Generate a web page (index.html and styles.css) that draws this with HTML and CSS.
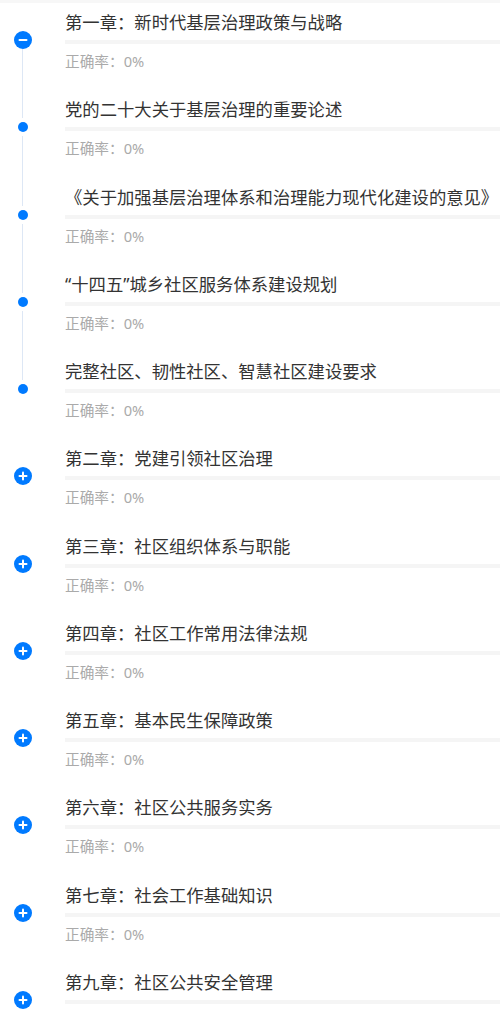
FILE: index.html
```html
<!DOCTYPE html>
<html lang="zh-CN">
<head>
  <meta charset="UTF-8">
  <meta name="viewport" content="width=device-width, initial-scale=1.0">
  <title>章节练习</title>
  <link rel="stylesheet" href="styles.css">
</head>
<body>
  <div class="top-strip"></div>

  <ul class="chapter-list">
    <!-- expanded chapter -->
    <li class="row first">
      <div class="rail">
        <span class="seg top"></span>
        <svg class="toggle" viewBox="0 0 18 18"><circle cx="9" cy="9" r="9" fill="#007aff"/><rect x="4.5" y="8" width="9" height="2" rx="1" fill="#fff"/></svg>
        <span class="seg bottom"></span>
      </div>
      <div class="content">
        <div class="title">第一章：新时代基层治理政策与战略</div>
        <div class="bar"></div>
        <div class="rate">正确率：0%</div>
      </div>
    </li>
    <li class="row">
      <div class="rail">
        <span class="seg top"></span>
        <span class="dot"></span>
        <span class="seg bottom"></span>
      </div>
      <div class="content">
        <div class="title">党的二十大关于基层治理的重要论述</div>
        <div class="bar"></div>
        <div class="rate">正确率：0%</div>
      </div>
    </li>
    <li class="row">
      <div class="rail">
        <span class="seg top"></span>
        <span class="dot"></span>
        <span class="seg bottom"></span>
      </div>
      <div class="content">
        <div class="title">《关于加强基层治理体系和治理能力现代化建设的意见》</div>
        <div class="bar"></div>
        <div class="rate">正确率：0%</div>
      </div>
    </li>
    <li class="row">
      <div class="rail">
        <span class="seg top"></span>
        <span class="dot"></span>
        <span class="seg bottom"></span>
      </div>
      <div class="content">
        <div class="title">“十四五”城乡社区服务体系建设规划</div>
        <div class="bar"></div>
        <div class="rate">正确率：0%</div>
      </div>
    </li>
    <li class="row last">
      <div class="rail">
        <span class="seg top"></span>
        <span class="dot"></span>
        <span class="seg bottom"></span>
      </div>
      <div class="content">
        <div class="title">完整社区、韧性社区、智慧社区建设要求</div>
        <div class="bar"></div>
        <div class="rate">正确率：0%</div>
      </div>
    </li>

    <!-- collapsed chapters -->
    <li class="row closed">
      <div class="rail">
        <span class="seg top"></span>
        <svg class="toggle" viewBox="0 0 18 18"><circle cx="9" cy="9" r="9" fill="#007aff"/><rect x="4.5" y="8" width="9" height="2" rx="1" fill="#fff"/><rect x="8" y="4.5" width="2" height="9" rx="1" fill="#fff"/></svg>
        <span class="seg bottom"></span>
      </div>
      <div class="content">
        <div class="title">第二章：党建引领社区治理</div>
        <div class="bar"></div>
        <div class="rate">正确率：0%</div>
      </div>
    </li>
    <li class="row closed">
      <div class="rail">
        <span class="seg top"></span>
        <svg class="toggle" viewBox="0 0 18 18"><circle cx="9" cy="9" r="9" fill="#007aff"/><rect x="4.5" y="8" width="9" height="2" rx="1" fill="#fff"/><rect x="8" y="4.5" width="2" height="9" rx="1" fill="#fff"/></svg>
        <span class="seg bottom"></span>
      </div>
      <div class="content">
        <div class="title">第三章：社区组织体系与职能</div>
        <div class="bar"></div>
        <div class="rate">正确率：0%</div>
      </div>
    </li>
    <li class="row closed">
      <div class="rail">
        <span class="seg top"></span>
        <svg class="toggle" viewBox="0 0 18 18"><circle cx="9" cy="9" r="9" fill="#007aff"/><rect x="4.5" y="8" width="9" height="2" rx="1" fill="#fff"/><rect x="8" y="4.5" width="2" height="9" rx="1" fill="#fff"/></svg>
        <span class="seg bottom"></span>
      </div>
      <div class="content">
        <div class="title">第四章：社区工作常用法律法规</div>
        <div class="bar"></div>
        <div class="rate">正确率：0%</div>
      </div>
    </li>
    <li class="row closed">
      <div class="rail">
        <span class="seg top"></span>
        <svg class="toggle" viewBox="0 0 18 18"><circle cx="9" cy="9" r="9" fill="#007aff"/><rect x="4.5" y="8" width="9" height="2" rx="1" fill="#fff"/><rect x="8" y="4.5" width="2" height="9" rx="1" fill="#fff"/></svg>
        <span class="seg bottom"></span>
      </div>
      <div class="content">
        <div class="title">第五章：基本民生保障政策</div>
        <div class="bar"></div>
        <div class="rate">正确率：0%</div>
      </div>
    </li>
    <li class="row closed">
      <div class="rail">
        <span class="seg top"></span>
        <svg class="toggle" viewBox="0 0 18 18"><circle cx="9" cy="9" r="9" fill="#007aff"/><rect x="4.5" y="8" width="9" height="2" rx="1" fill="#fff"/><rect x="8" y="4.5" width="2" height="9" rx="1" fill="#fff"/></svg>
        <span class="seg bottom"></span>
      </div>
      <div class="content">
        <div class="title">第六章：社区公共服务实务</div>
        <div class="bar"></div>
        <div class="rate">正确率：0%</div>
      </div>
    </li>
    <li class="row closed">
      <div class="rail">
        <span class="seg top"></span>
        <svg class="toggle" viewBox="0 0 18 18"><circle cx="9" cy="9" r="9" fill="#007aff"/><rect x="4.5" y="8" width="9" height="2" rx="1" fill="#fff"/><rect x="8" y="4.5" width="2" height="9" rx="1" fill="#fff"/></svg>
        <span class="seg bottom"></span>
      </div>
      <div class="content">
        <div class="title">第七章：社会工作基础知识</div>
        <div class="bar"></div>
        <div class="rate">正确率：0%</div>
      </div>
    </li>
    <li class="row closed">
      <div class="rail">
        <span class="seg top"></span>
        <svg class="toggle" viewBox="0 0 18 18"><circle cx="9" cy="9" r="9" fill="#007aff"/><rect x="4.5" y="8" width="9" height="2" rx="1" fill="#fff"/><rect x="8" y="4.5" width="2" height="9" rx="1" fill="#fff"/></svg>
        <span class="seg bottom"></span>
      </div>
      <div class="content">
        <div class="title">第九章：社区公共安全管理</div>
        <div class="bar"></div>
        <div class="rate">正确率：0%</div>
      </div>
    </li>
  </ul>
</body>
</html>
```

FILE: styles.css
```css
html, body {
  margin: 0;
  padding: 0;
  background: #fff;
}
body {
  font-family: "Noto Sans", "Noto Sans CJK SC", sans-serif;
  overflow: hidden;
}
.top-strip {
  height: 3.3px;
  background-color: #f7f7f7;
}
.chapter-list {
  list-style: none;
  margin: 0;
  padding: 0;
}
.row {
  display: grid;
  grid-template-columns: 45px 1fr;
  column-gap: 20px;
  height: 87.27px;
}
.rail {
  display: flex;
  flex-direction: column;
  align-items: center;
}
.seg {
  width: 1px;
  background-color: #dde7f5;
}
.seg.top {
  height: 27.7px;
}
.seg.bottom {
  flex: 1;
}
.first .seg.top,
.last .seg.bottom,
.closed .seg {
  background-color: transparent;
}
.toggle {
  display: block;
  width: 18px;
  height: 18px;
  flex-shrink: 0;
}
.dot {
  width: 10px;
  height: 10px;
  border-radius: 50%;
  background-color: #007aff;
  flex-shrink: 0;
  margin: 4px 0;
}
.content {
  padding-top: 6.7px;
  min-width: 0;
}
.title {
  font-size: 17.33px;
  line-height: 24px;
  color: #333;
  white-space: nowrap;
  overflow: hidden;
}
.bar {
  height: 4px;
  margin-top: 6px;
  background-color: #f5f5f5;
}
.rate {
  margin-top: 7px;
  font-size: 14.67px;
  line-height: 20px;
  color: #aaa;
}
```
